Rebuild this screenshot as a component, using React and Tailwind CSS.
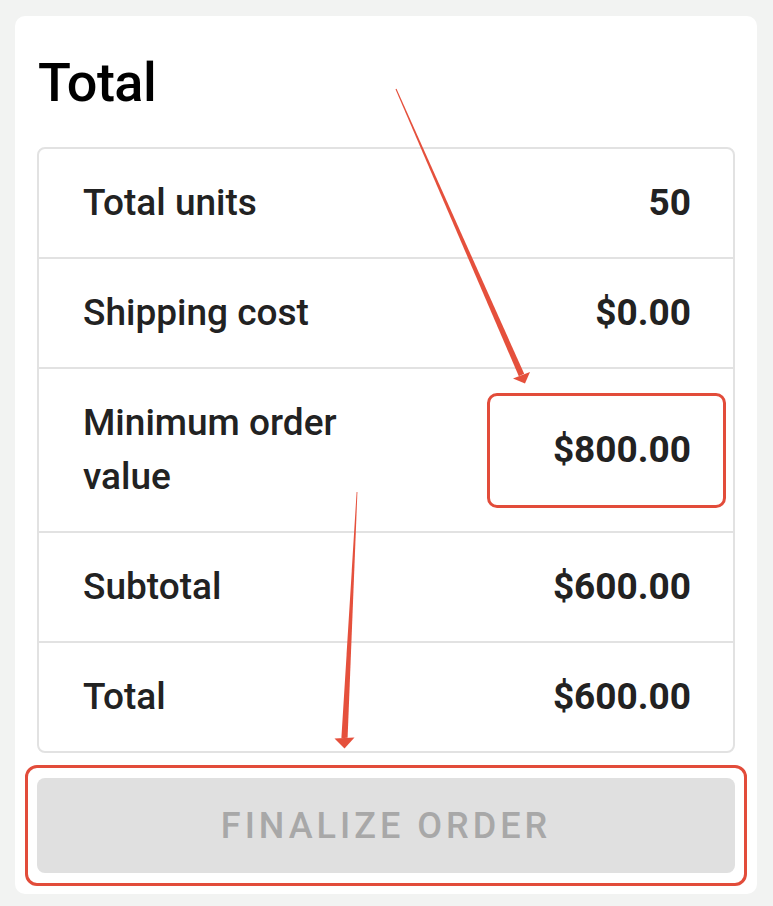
const rows = [
  { label: 'Total units', value: '50' },
  { label: 'Shipping cost', value: '$0.00' },
  { label: 'Minimum order value', value: '$800.00' },
  { label: 'Subtotal', value: '$600.00' },
  { label: 'Total', value: '$600.00' },
]

function Arrows() {
  return (
    <svg className="absolute left-0 top-0 pointer-events-none" width="773" height="906" viewBox="0 0 773 906">
      {/* arrow to minimum order value */}
      <polygon points="395.5,89.2 396.5,88.8 524.2,373.8 518.8,376.2" fill="#e5503c" />
      <polygon points="513,378.5 530,372 525,383.5" fill="#e5503c" />
      {/* arrow to finalize button */}
      <polygon points="356.6,492 357.4,492 347.6,737.8 341.4,738.2" fill="#e5503c" />
      <polygon points="334.5,738.5 354.5,737.5 344.5,748.5" fill="#e5503c" />
    </svg>
  )
}

export default function App() {
  return (
    <div className="relative min-h-screen bg-[#f2f3f2] pl-[15px] pt-[16px]" style={{ fontFamily: 'Roboto, "Liberation Sans", sans-serif' }}>
      <div className="w-[742px] h-[878px] bg-white rounded-[10px] px-[22px] pt-[37px]">
        <h1 className="text-[54px] leading-[60px] font-medium text-black tracking-[-0.5px] pl-[1px]">Total</h1>

        <div className="mt-[34px] border-2 border-[#e2e2e2] rounded-[8px]">
          {rows.map((row, i) => (
            <div
              key={row.label}
              className={`flex items-center justify-between pl-[44px] pr-[42px] py-[27px] ${i < rows.length - 1 ? 'border-b-2 border-[#e2e2e2]' : ''}`}
            >
              <span className="w-1/2 text-[37px] leading-[54px] font-medium text-[#222]">{row.label}</span>
              <span className="text-[37px] leading-[54px] font-bold text-[#222]">{row.value}</span>
            </div>
          ))}
        </div>

        <div className="mt-[25px] relative">
          <button
            disabled
            className="w-full h-[95px] rounded-[8px] bg-[#e0e0e0] text-[#a8a8a8] text-[36px] font-medium tracking-[4px] uppercase"
          >
            Finalize order
          </button>
          {/* annotation box round the button */}
          <div className="absolute -left-[12px] -right-[12px] -top-[13px] -bottom-[13px] border-[3px] border-[#e24c3a] rounded-[12px]" />
        </div>
      </div>

      {/* annotation box round the minimum order value */}
      <div className="absolute left-[487px] top-[393px] w-[239px] h-[115px] border-[3px] border-[#e24c3a] rounded-[10px]" />
      <Arrows />
    </div>
  )
}
